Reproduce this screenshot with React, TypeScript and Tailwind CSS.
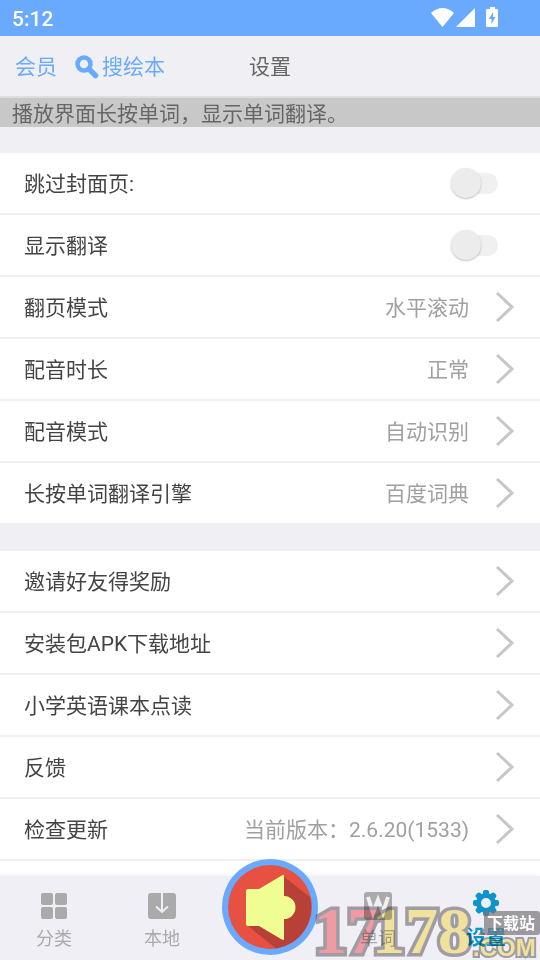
import { useState } from 'react'

type Row = { label: string; value?: string }

const playRows: Row[] = [
  { label: '翻页模式', value: '水平滚动' },
  { label: '配音时长', value: '正常' },
  { label: '配音模式', value: '自动识别' },
  { label: '长按单词翻译引擎', value: '百度词典' },
]

const moreRows: Row[] = [
  { label: '邀请好友得奖励' },
  { label: '安装包APK下载地址' },
  { label: '小学英语课本点读' },
  { label: '反馈' },
  { label: '检查更新', value: '当前版本：2.6.20(1533)' },
]

const teeth = [0, 45, 90, 135, 180, 225, 270, 315]

const StatusBar = () => (
  <div className="flex h-9 shrink-0 items-center justify-between bg-[#69aaff] pr-10 pl-3 text-white">
    <span className="pt-0.5 font-medium">5:12</span>
    <svg className="h-6 w-[70px]" viewBox="0 0 70 24" fill="#fff">
      <path d="M1 7Q12.500-3 24 7L12.500 21Z" />
      <path d="M26 21 45 2V21Z" />
      <path d="M60 1h5v2h2q1 0 1 1v16q0 1-1 1H57q-1 0-1-1V4q0-1 1-1h3Z" />
      <path d="M63 6l-4 7h2.500v5l4-7H63Z" fill="#69aaff" />
    </svg>
  </div>
)

const Toggle = ({ label }: { label: string }) => {
  const [on, setOn] = useState(false)

  return (
    <label className="flex h-[62px] items-center justify-between border-b-2 border-[#efeff4] bg-white pr-[42px] pl-6">
      <span className="pt-0.5">{label}</span>
      <span className="relative flex h-8 w-12 items-center">
        <input
          type="checkbox"
          className="peer absolute inset-0 z-10 opacity-0"
          checked={on}
          onChange={() => setOn(!on)}
        />
        <span className="ml-2 h-[21px] w-10 rounded-full bg-[#f0f0f0] peer-checked:bg-[#b9d7ff]" />
        <span className="absolute left-px size-[30px] rounded-full bg-[#ececec] shadow-[0_1px_2px_rgba(0,0,0,0.25)] peer-checked:left-4 peer-checked:bg-[#69aaff]" />
      </span>
    </label>
  )
}

const LinkRow = ({ label, value }: Row) => (
  <button
    type="button"
    className="flex h-[62px] w-full items-center border-b-2 border-[#efeff4] bg-white px-6 text-left"
  >
    <span className="flex-1 pt-0.5">{label}</span>
    <span className="mr-[25px] pt-0.5 text-[#a0a0a0]">{value}</span>
    <svg
      className="h-8 w-[22px]"
      viewBox="0 0 22 32"
      fill="none"
      stroke="#c7c7c7"
      strokeWidth="3"
    >
      <path d="M3 2 18 16 3 30" />
    </svg>
  </button>
)

const Watermark = () => (
  <div className="pointer-events-none">
    {/* multiply keeps the tab labels readable under the digits */}
    <svg
      className="absolute right-0 bottom-0 h-[66px] w-[224px] overflow-visible mix-blend-multiply"
      viewBox="0 0 224 66"
      paintOrder="stroke"
      stroke="#a9a8ab"
    >
      <g
        className="font-['Liberation_Serif',serif] font-bold"
        fontSize="66"
        strokeWidth="7"
      >
        <text x="-2" y="59" fill="#ffa4ab">17</text>
        <text x="56" y="59" fill="#fff0a2">178</text>
      </g>
      <text
        className="font-['Liberation_Sans',sans-serif] font-bold"
        x="157"
        y="62"
        fontSize="24"
        fill="#fff0a2"
        strokeWidth="4"
      >
        .COM
      </text>
    </svg>
    <svg
      className="absolute right-0 bottom-0 h-[66px] w-[224px]"
      viewBox="0 0 224 66"
    >
      <path d="M168 17h53q3 0 3 3v18q0 3-3 3h-59l6-7Z" fill="#77757a" opacity="0.7" />
      <text x="171" y="35" fontSize="16" fontWeight="bold" fill="#fff">
        下载站
      </text>
    </svg>
  </div>
)

const tab = 'flex flex-1 flex-col items-center pt-4 text-lg leading-6 text-[#aaa]'

const TabBar = () => (
  <nav className="absolute inset-x-0 bottom-0 flex h-[84px] bg-[#f0eff5] shadow-[0_-1px_4px_rgba(240,239,245,1)]">
    <button type="button" className={tab}>
      <svg className="mb-[7px] size-7" viewBox="0 0 28 28" fill="#aaa">
        <rect x="1" y="1" width="12" height="12" rx="2" />
        <rect x="15" y="1" width="12" height="12" rx="2" />
        <rect x="1" y="15" width="12" height="12" rx="2" />
        <rect x="15" y="15" width="12" height="12" rx="2" />
      </svg>
      分类
    </button>
    <button type="button" className={tab}>
      <svg className="mb-[7px] size-7" viewBox="0 0 28 28" fill="none">
        <rect x="0" y="1" width="28" height="26" rx="3" fill="#aaa" />
        <path d="M14 1V20M8 14.500 14 20 20 14.500" stroke="#f0eff5" strokeWidth="2" />
      </svg>
      本地
    </button>
    <div className="flex flex-1 justify-center">
      <button type="button" aria-label="播放" className="-mt-[17px] size-24">
        <svg viewBox="0 0 96 96">
          <circle cx="48" cy="48" r="48" fill="#69aaff" />
          <circle cx="48" cy="48" r="42" fill="#e75142" />
          <path d="M61 17 88 38A42 42 0 0 1 54 89.500L25 66Z" fill="#b74136" />
          <path
            d="M26 30h11l22-13q3-2 3-1v21a11.500 11.500 0 0 1 0 23v20q0 2-3 0L37 67H26q-2 0-2-2V32q0-2 2-2Z"
            fill="#f0fd92"
          />
        </svg>
      </button>
    </div>
    <button type="button" className={tab}>
      <svg className="mb-[7px] size-7" viewBox="0 0 28 28" fill="none">
        <rect width="28" height="28" rx="3" fill="#aaa" />
        <path d="M4 5 9 21 14 8 19 21 24 5" stroke="#f0eff5" strokeWidth="4" />
      </svg>
      单词
    </button>
    <button
      type="button"
      className="flex flex-1 flex-col items-center pt-[13px] text-xl leading-6 font-bold text-[#0d94cc]"
    >
      <svg className="mb-[9px] size-7" viewBox="0 0 28 28" fill="none">
        <circle cx="14" cy="14" r="7.500" stroke="#0d94cc" strokeWidth="5" />
        {teeth.map((deg) => (
          <rect
            key={deg}
            x="11"
            y="1"
            width="6"
            height="6"
            rx="2"
            fill="#0d94cc"
            transform={`rotate(${deg} 14 14)`}
          />
        ))}
      </svg>
      设置
    </button>
  </nav>
)

const App = () => {
  return (
    <div className="relative flex h-screen flex-col overflow-hidden bg-[#efeff4] font-[Roboto,'Noto_Sans_CJK_SC',sans-serif] text-[21px] leading-7 text-[#444]">
      <StatusBar />
      <header className="grid h-[62px] shrink-0 grid-cols-3 items-center border-b-2 border-[#dedede] px-[15px] pt-0.5">
        <div className="flex gap-[18px] whitespace-nowrap text-[#69aaff]">
          <button type="button">会员</button>
          <button type="button" className="flex items-center gap-[3px]">
            <svg className="size-6" viewBox="0 0 24 24" fill="none" stroke="#69aaff">
              <circle cx="9" cy="9" r="6.500" strokeWidth="4.500" />
              <path d="M14 14 20.500 20.500" strokeWidth="5.500" strokeLinecap="round" />
            </svg>
            搜绘本
          </button>
        </div>
        <h1 className="text-center text-[#666]">设置</h1>
      </header>
      <p className="h-[29px] shrink-0 bg-[#c8c8c8] px-3 pt-0.5 text-[#666]">
        播放界面长按单词，显示单词翻译。
      </p>
      <main>
        <section className="mt-[26px]">
          <Toggle label="跳过封面页:" />
          <Toggle label="显示翻译" />
          {playRows.map((row) => (
            <LinkRow key={row.label} {...row} />
          ))}
        </section>
        <section className="mt-[26px]">
          {moreRows.map((row) => (
            <LinkRow key={row.label} {...row} />
          ))}
          <div className="h-16 bg-white" />
        </section>
      </main>
      <TabBar />
      <Watermark />
    </div>
  )
}

export default App
